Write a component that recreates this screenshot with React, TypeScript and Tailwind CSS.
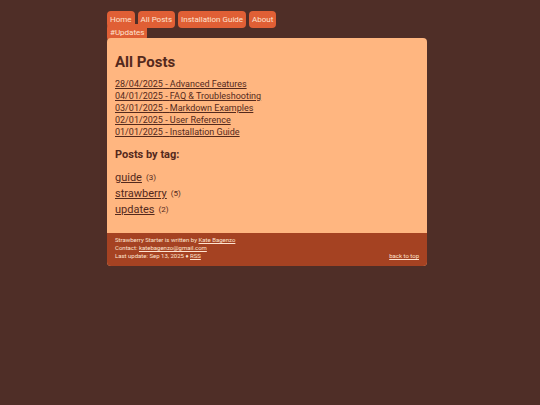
const navLinks = ["Home", "All Posts", "Installation Guide", "About", "#Updates"];

const posts = [
  { date: "28/04/2025", title: "Advanced Features" },
  { date: "04/01/2025", title: "FAQ & Troubleshooting" },
  { date: "03/01/2025", title: "Markdown Examples" },
  { date: "02/01/2025", title: "User Reference" },
  { date: "01/01/2025", title: "Installation Guide" },
];

const tags = [
  { name: "guide", count: 3 },
  { name: "strawberry", count: 5 },
  { name: "updates", count: 2 },
];

export default function App() {
  return (
    <div
      id="top"
      className="min-h-screen bg-[#4f2e27] pt-[13px] pr-[6px] font-[Roboto,sans-serif] text-[#54291c]"
    >
      <div className="mx-auto max-w-[320px]">
        {/* Navigation */}
        <nav className="-mb-px max-w-44 text-[8px] leading-[13px] whitespace-nowrap text-[#ffe3cf]">
          <ul className="flex flex-wrap gap-x-[3px]">
            {navLinks.map((link) => (
              <li key={link}>
                <a href="#top" className="rounded-sm bg-[#e05f35] px-[3px] py-1">
                  {link}
                </a>
              </li>
            ))}
          </ul>
        </nav>

        <div className="relative overflow-hidden rounded-sm bg-[#ffb680]">
          {/* Posts */}
          <main className="px-2 pt-3 pb-[15px]">
            <h1 className="text-[15px] leading-6 font-bold">All Posts</h1>
            <ul className="mt-1 text-[9px] leading-3">
              {posts.map((post) => (
                <li key={post.title}>
                  <a href="#top" className="underline">
                    {post.date} - {post.title}
                  </a>
                </li>
              ))}
            </ul>

            <h2 className="mt-[9px] text-[11px] leading-4 font-bold">Posts by tag:</h2>
            <ul className="mt-[7px] text-[11px] leading-4">
              {tags.map((tag) => (
                <li key={tag.name} className="flex items-center gap-1">
                  <a href="#top" className="underline">
                    {tag.name}
                  </a>
                  <span className="text-[8px]">({tag.count})</span>
                </li>
              ))}
            </ul>
          </main>

          {/* Footer */}
          <footer className="bg-[#a54222] px-2 pt-[3px] pb-[6px] text-[6px] leading-2 text-[#ffe3cf]">
            <p>
              Strawberry Starter is written by{" "}
              <a href="#top" className="underline">
                Kate Bagenzo
              </a>
            </p>
            <p>
              Contact:{" "}
              <a href="mailto:katebagenzo@gmail.com" className="underline">
                katebagenzo@gmail.com
              </a>
            </p>
            <div className="flex justify-between">
              <p>
                Last update: Sep 13, 2025 ♦{" "}
                <a href="#top" className="underline">
                  RSS
                </a>
              </p>
              <a href="#top" className="underline">
                back to top
              </a>
            </div>
          </footer>
        </div>
      </div>
    </div>
  );
}
